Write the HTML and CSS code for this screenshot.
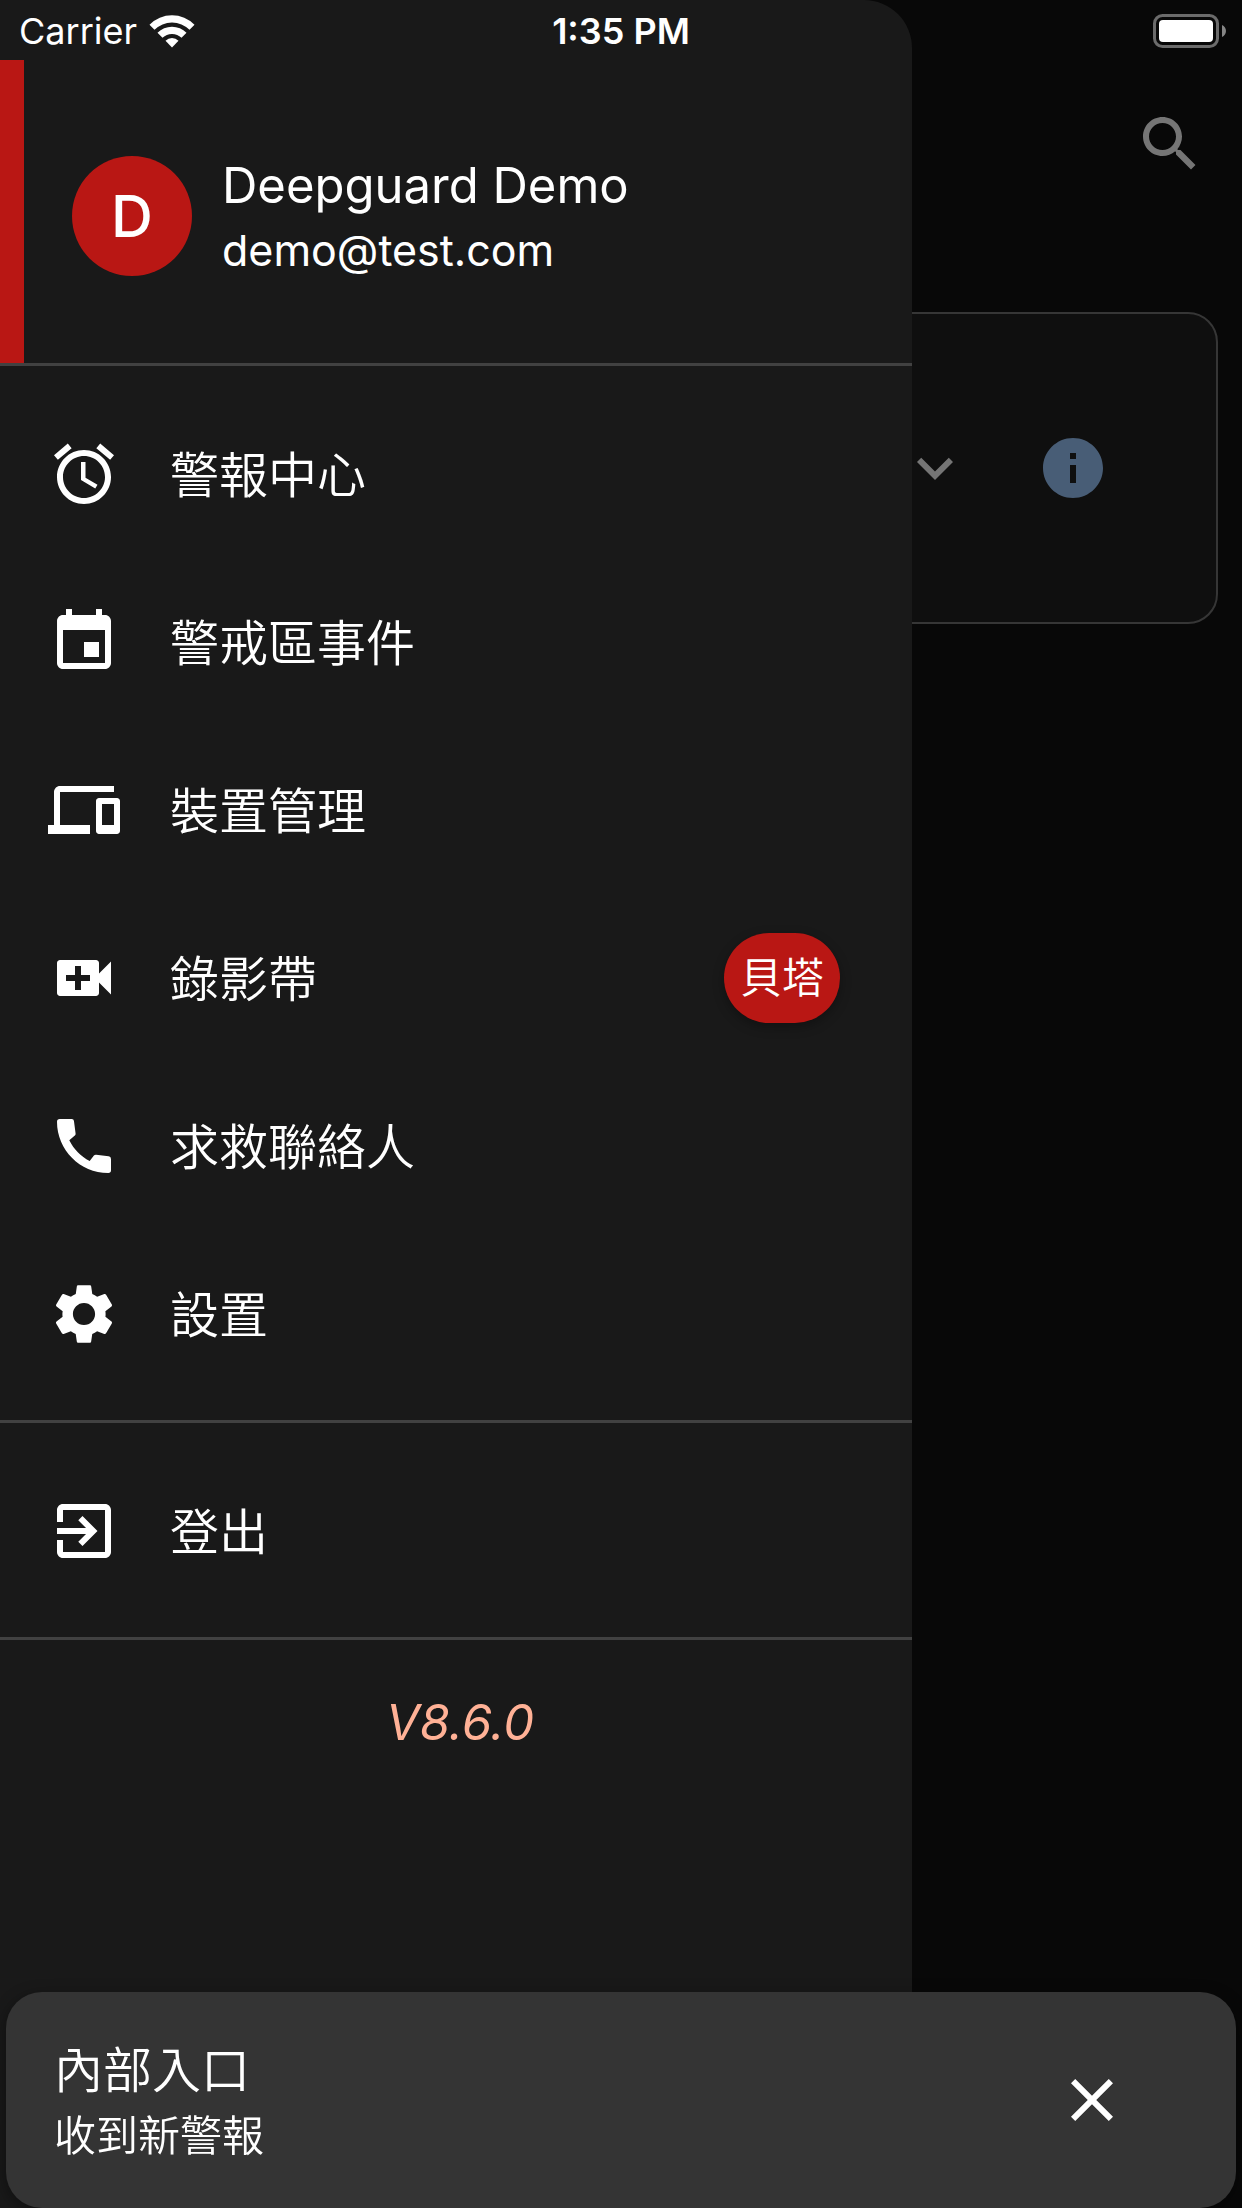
FILE: index.html
```html
<!DOCTYPE html>
<html lang="zh-Hant">
<head>
  <meta charset="UTF-8" />
  <meta name="viewport" content="width=device-width, initial-scale=1.0"/>
  <title>Deepguard</title>
  <link rel="stylesheet" href="styles.css">
</head>
<body>

  <!-- Status bar -->
  <div class="status-bar">
    <div class="status-carrier">
      <span>Carrier</span>
      <svg class="wifi" viewBox="0 0 46 34">
        <path d="M0.500 10.800 A31.500 31.500 0 0 1 45.500 10.800 L40.500 15.800 A24.600 24.600 0 0 0 5.500 15.800 Z"/>
        <path d="M8.500 18.800 A20.500 20.500 0 0 1 37.500 18.800 L32.500 23.800 A13.500 13.500 0 0 0 13.500 23.800 Z"/>
        <path d="M16.500 26.800 A9.200 9.200 0 0 1 29.500 26.800 L23 33.500 Z"/>
      </svg>
    </div>
    <div class="status-time">1:35 PM</div>
    <div class="status-battery">
      <svg class="battery" viewBox="0 0 74 34">
        <rect class="battery-case" x="1.500" y="1.500" width="63" height="31" rx="8"/>
        <rect x="6" y="6" width="54" height="22" rx="4"/>
        <path class="battery-tip" d="M69 11c2.500 1 4 3.500 4 6s-1.500 5-4 6z"/>
      </svg>
    </div>
  </div>

  <!-- Page behind the drawer -->
  <main class="page">
    <div class="toolbar">
      <button class="icon-button" type="button" aria-label="搜尋">
        <svg class="icon" viewBox="0 0 24 24"><path d="M15.500 14h-.79l-.28-.27C15.410 12.590 16 11.110 16 9.500 16 5.910 13.090 3 9.500 3S3 5.910 3 9.500 5.910 16 9.500 16c1.610 0 3.090-.59 4.230-1.570l.27.28v.79l5 4.990L20.490 19l-4.990-5zm-6 0C7.010 14 5 11.990 5 9.500S7.010 5 9.500 5 14 7.010 14 9.500 11.990 14 9.500 14z"/></svg>
      </button>
    </div>
    <section class="card">
      <button class="icon-button" type="button" aria-label="展開">
        <svg class="icon" viewBox="0 0 24 24"><path d="M16.590 8.590L12 13.170 7.410 8.590 6 10l6 6 6-6z"/></svg>
      </button>
      <button class="icon-button info" type="button" aria-label="資訊">
        <svg class="icon" viewBox="0 0 24 24"><path d="M12 2C6.480 2 2 6.480 2 12s4.480 10 10 10 10-4.480 10-10S17.520 2 12 2zm1 15h-2v-6h2v6zm0-8h-2V7h2v2z"/></svg>
      </button>
    </section>
  </main>

  <!-- Drawer -->
  <aside class="drawer">
    <div class="profile">
      <div class="avatar">D</div>
      <div class="profile-info">
        <div class="profile-name">Deepguard Demo</div>
        <div class="profile-email">demo@test.com</div>
      </div>
    </div>

    <nav class="menu">
      <a class="menu-item" href="#alarms">
        <svg class="icon" viewBox="0 0 24 24"><path d="M22 5.720l-4.600-3.860-1.290 1.530 4.600 3.860L22 5.720zM7.880 3.390L6.600 1.860 2 5.710l1.290 1.530 4.590-3.850zM12.500 8H11v6l4.750 2.850.75-1.230-4-2.370V8zM12 4c-4.970 0-9 4.030-9 9s4.020 9 9 9c4.970 0 9-4.030 9-9s-4.030-9-9-9zm0 16c-3.870 0-7-3.130-7-7s3.130-7 7-7 7 3.130 7 7-3.130 7-7 7z"/></svg>
        <span class="menu-label">警報中心</span>
      </a>
      <a class="menu-item" href="#events">
        <svg class="icon" viewBox="0 0 24 24"><path d="M17 12h-5v5h5v-5zM16 1v2H8V1H6v2H5c-1.110 0-1.990.9-1.990 2L3 19c0 1.100.89 2 2 2h14c1.100 0 2-.9 2-2V5c0-1.100-.9-2-2-2h-1V1h-2zm3 18H5V8h14v11z"/></svg>
        <span class="menu-label">警戒區事件</span>
      </a>
      <a class="menu-item" href="#devices">
        <svg class="icon" viewBox="0 0 24 24"><path d="M4 6h18V4H4c-1.100 0-2 .9-2 2v11H0v3h14v-3H4V6zm19 2h-6c-.55 0-1 .45-1 1v10c0 .55.45 1 1 1h6c.55 0 1-.45 1-1V9c0-.55-.45-1-1-1zm-1 9h-4v-7h4v7z"/></svg>
        <span class="menu-label">裝置管理</span>
      </a>
      <a class="menu-item" href="#videos">
        <svg class="icon" viewBox="0 0 24 24"><path d="M17 10.500V7c0-.55-.45-1-1-1H4c-.55 0-1 .45-1 1v10c0 .55.45 1 1 1h12c.55 0 1-.45 1-1v-3.500l4 4v-11l-4 4zM14 13h-3v3H9v-3H6v-2h3V8h2v3h3v2z"/></svg>
        <span class="menu-label">錄影帶</span>
        <span class="badge">貝塔</span>
      </a>
      <a class="menu-item" href="#contacts">
        <svg class="icon" viewBox="0 0 24 24"><path d="M3.900 3H7.900Q8.600 3 8.650 3.700L9.200 7.800Q9.250 8.200 8.950 8.500L7.100 10.100C8.600 13.100 10.900 15.500 13.900 17L15.300 15.200Q15.600 14.850 16.050 14.900L20.200 15.400Q21 15.500 21 16.300V20.100Q21 21 20.100 21C10.600 21 3 13.200 3 3.900Q3 3 3.900 3Z"/></svg>
        <span class="menu-label">求救聯絡人</span>
      </a>
      <a class="menu-item" href="#settings">
        <svg class="icon" viewBox="0 0 24 24"><path d="M19.140 12.940c.04-.3.06-.61.06-.94 0-.32-.02-.64-.07-.94l2.030-1.580c.18-.14.23-.41.12-.61l-1.920-3.320c-.12-.22-.37-.29-.59-.22l-2.390.96c-.5-.38-1.030-.7-1.620-.94l-.36-2.540c-.04-.24-.24-.41-.48-.41h-3.840c-.24 0-.43.17-.47.41l-.36 2.540c-.59.24-1.130.57-1.620.94l-2.390-.96c-.22-.08-.47 0-.59.22L2.740 8.870c-.12.21-.08.47.12.61l2.030 1.580c-.05.3-.09.63-.09.94s.02.64.07.94l-2.030 1.580c-.18.14-.23.41-.12.61l1.920 3.320c.12.22.37.29.59.22l2.390-.96c.5.38 1.030.7 1.620.94l.36 2.540c.05.24.24.41.48.41h3.840c.24 0 .44-.17.47-.41l.36-2.540c.59-.24 1.130-.56 1.620-.94l2.390.96c.22.08.47 0 .59-.22l1.920-3.320c.12-.22.07-.47-.12-.61l-2.010-1.580zM12 15.700c-2.040 0-3.700-1.660-3.700-3.700s1.660-3.700 3.700-3.700 3.700 1.660 3.700 3.700-1.660 3.700-3.700 3.700z"/></svg>
        <span class="menu-label">設置</span>
      </a>
    </nav>

    <div class="menu">
      <a class="menu-item" href="#logout">
        <svg class="icon" viewBox="0 0 24 24"><path d="M10.090 15.590L11.500 17l5-5-5-5-1.410 1.410L12.670 11H3v2h9.670l-2.580 2.590zM19 3H5c-1.110 0-2 .9-2 2v4h2V5h14v14H5v-4H3v4c0 1.100.89 2 2 2h14c1.100 0 2-.9 2-2V5c0-1.100-.9-2-2-2z"/></svg>
        <span class="menu-label">登出</span>
      </a>
    </div>

    <p class="version">V8.6.0</p>
  </aside>

  <!-- Notification -->
  <div class="toast" role="status">
    <div class="toast-text">
      <div class="toast-title">內部入口</div>
      <div class="toast-body">收到新警報</div>
    </div>
    <button class="icon-button toast-close" type="button" aria-label="關閉">
      <svg class="icon" viewBox="0 0 24 24"><path d="M19 6.410L17.590 5 12 10.590 6.410 5 5 6.410 10.590 12 5 17.590 6.410 19 12 13.410 17.590 19 19 17.590 13.410 12z"/></svg>
    </button>
  </div>

</body>
</html>
```

FILE: styles.css
```css
:root {
  --red: #b91714;
  --page: #080808;
  --surface: #191919;
  --line: #414141;
  --muted: #757575;
  --font-main: Inter, "Noto Sans CJK TC", sans-serif;
}

* {
  margin: 0;
  padding: 0;
  box-sizing: border-box;
}

body {
  position: relative;
  min-height: 100vh;
  font-family: var(--font-main);
  font-size: 49px;
  font-weight: 350;
  background-color: var(--page);
  color: white;
  overflow-x: hidden;
}

.icon {
  display: block;
  flex: none;
  width: 72px;
  height: 72px;
  fill: currentColor;
}

.icon-button {
  border: none;
  background: none;
  color: var(--muted);
  cursor: pointer;
}

/* Status bar */
.status-bar {
  position: absolute;
  top: 0;
  left: 0;
  right: 0;
  z-index: 3;
  display: grid;
  grid-template-columns: 1fr auto 1fr;
  align-items: center;
  height: 61px;
  padding: 0 15px;
  font-size: 36px;
  font-weight: 400;
}

.status-carrier {
  display: flex;
  align-items: center;
  gap: 12px;
  padding-left: 4px;
}

.status-time {
  font-weight: 600;
}

.status-battery {
  display: flex;
  justify-content: flex-end;
}

.wifi {
  width: 46px;
  height: 34px;
  fill: white;
}

.battery {
  width: 74px;
  height: 34px;
  fill: white;
}

.battery-case {
  fill: none;
  stroke: #6b6b6b;
  stroke-width: 3;
}

.battery-tip {
  fill: #858585;
}

/* Page */
.page {
  padding: 60px 24px 0;
}

.toolbar {
  display: flex;
  align-items: center;
  justify-content: flex-end;
  height: 168px;
  padding-right: 12px;
}

.card {
  display: flex;
  align-items: center;
  justify-content: flex-end;
  gap: 66px;
  height: 312px;
  margin-top: 84px;
  padding-right: 107px;
  background: #0f0f0f;
  border: 2px solid #363636;
  border-radius: 30px;
}

.info {
  color: #485d76;
}

/* Drawer */
.drawer {
  position: absolute;
  top: 0;
  bottom: 0;
  left: 0;
  z-index: 1;
  width: 912px;
  max-width: 85%;
  padding-top: 60px;
  background: var(--surface);
  border-radius: 0 48px 0 0;
}

.profile {
  display: flex;
  align-items: center;
  gap: 30px;
  height: 306px;
  padding: 9px 48px 0 72px;
  background: linear-gradient(to right, var(--red) 24px, transparent 24px);
  border-bottom: 3px solid var(--line);
}

.avatar {
  flex: none;
  width: 120px;
  height: 120px;
  border-radius: 50%;
  background: var(--red);
  font-size: 58px;
  font-weight: 500;
  line-height: 120px;
  text-align: center;
}

.profile-info {
  padding-top: 4px;
  font-weight: 400;
  line-height: 65px;
}

.profile-email {
  font-size: 43px;
}

.menu {
  padding: 24px 0 22px;
  border-bottom: 3px solid var(--line);
}

.menu-item {
  display: flex;
  align-items: center;
  gap: 50px;
  height: 168px;
  padding: 0 72px 0 48px;
  color: white;
  text-decoration: none;
}

.menu-label {
  padding-bottom: 5px;
}

.badge {
  margin-left: auto;
  padding: 0 16px;
  border-radius: 45px;
  background: var(--red);
  box-shadow: 0 4px 12px rgba(0, 0, 0, 0.3);
  font-size: 42px;
  line-height: 90px;
}

.version {
  margin-top: 50px;
  padding-left: 8px;
  color: #ffb196;
  font-style: italic;
  font-weight: 400;
  line-height: 66px;
  text-align: center;
}

/* Notification */
.toast {
  position: fixed;
  left: 6px;
  right: 6px;
  bottom: 0;
  z-index: 2;
  display: flex;
  align-items: center;
  justify-content: space-between;
  height: 216px;
  padding: 0 108px 0 48px;
  background: #343434;
  border-radius: 36px;
  box-shadow: 0 4px 16px rgba(0, 0, 0, 0.4);
}

.toast-text {
  padding-top: 6px;
  line-height: 65px;
}

.toast-body {
  font-size: 42px;
}

.toast-close {
  color: white;
}
```
